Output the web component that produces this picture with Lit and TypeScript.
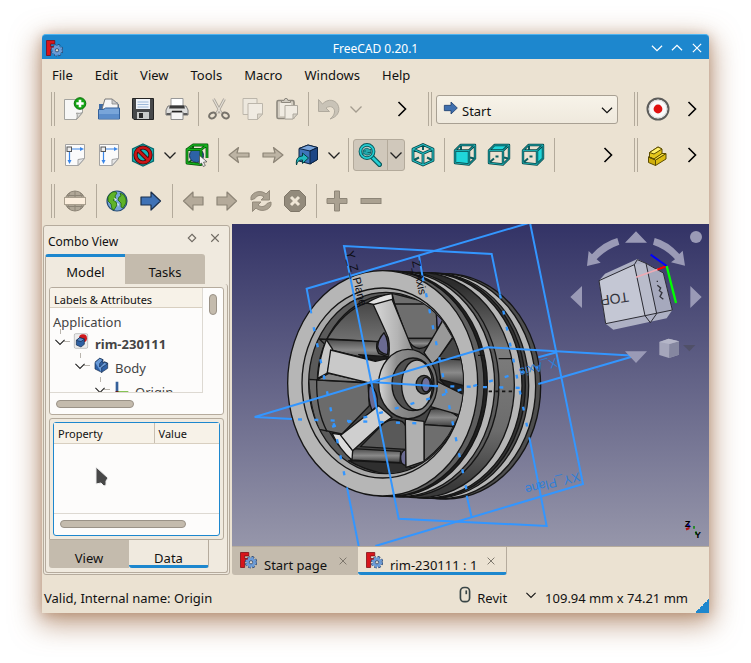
import { LitElement, html, svg, css, nothing } from "lit";
import type { SVGTemplateResult, TemplateResult } from "lit";
import { customElement, property } from "lit/decorators.js";
import { classMap } from "lit/directives/class-map.js";

const logo = svg`
  <path d="M2 2h11v4.500H7.500V10H12v4H7.500v8H2z" fill="#d8161c" stroke="#7c0a10" />
  <circle cx="16" cy="15" r="5.500" fill="none" stroke="#243f68" stroke-width="5.500" stroke-dasharray="2.700 1.620" />
  <circle cx="16" cy="15" r="4.200" fill="none" stroke="#6c9bd6" stroke-width="3.500" />
  <circle cx="16" cy="15" r="5.500" fill="none" stroke="#6c9bd6" stroke-width="3.800" stroke-dasharray="2.300 2.020" />
  <circle cx="16" cy="15" r="2.200" fill="#e4dccf" stroke="#243f68" />`;

const arrowRight = (fill: string, line: string) => svg`
  <path d="M2 8h10V3l9.500 9L12 21v-5H2z" fill=${fill} stroke=${line} stroke-width="1.200" stroke-linejoin="round" />`;
const arrowLeft = (fill: string, line: string) => svg`
  <path d="M22 8H12V3l-9.500 9L12 21v-5h10z" fill=${fill} stroke=${line} stroke-width="1.200" stroke-linejoin="round" />`;

/** A wire cube with one face filled; back edges lie under the filled face. */
const boxFrame = (face: string) => svg`
  <g fill="none" stroke-linejoin="round">
    <path d="M8 3v4M3 19l4-3.500M17 14.500l4 1M8.500 13.500h3" stroke="#0c5f62" stroke-width="2" />
    <path d=${face} fill="#20d6da" />
    <path d="M2 7.500h14v14L2 20zM2 7.500L7.500 2H22l-6 5.500M22 2v13.500l-6 6" stroke="#07484b" stroke-width="2.400" />
    <path d="M2 7.500h14v14L2 20zM2 7.500L7.500 2H22l-6 5.500M22 2v13.500l-6 6" stroke="#1fb4b8" stroke-width=".9" />
  </g>`;

const sketchSheet = svg`
  <path d="M2.500 1.500h19v14l-6 7h-13z" fill="#fbfbfb" stroke="#a3a3a3" />
  <path d="M21.500 15.500l-6.500 1v6z" fill="#e6e6e6" stroke="#a3a3a3" />
  <path d="M9 6h9M6.500 9v9" stroke="#3a86e8" stroke-width="1.200" />
  <path d="M17 4l4 2-4 2zM4.500 17l2 4 2-4z" fill="#3a86e8" />
  <rect x="4" y="4" width="4.500" height="4.500" fill="#eee" stroke="#555" />`;

const icons: Record<string, SVGTemplateResult> = {
  logo,
  new: svg`
    <path d="M1.500 2.500h18v13l-6 7h-12z" fill="#f7f7f6" stroke="#a3a39f" />
    <path d="M19.500 15.500c-2 1-4 1-6 .5 1 2 1 4 0 6.500z" fill="#dcdcda" stroke="#9a9a96" />
    <circle cx="17" cy="6.500" r="5.800" fill="#12a512" stroke="#087008" />
    <path d="M17 2.800v7.400M13.300 6.500h7.400" stroke="#fff" stroke-width="2.600" />`,
  open: svg`
    <path d="M2 7h5l1-2h12l2 3v6H2z" fill="#3e6ba5" />
    <path d="M5 12l3-10h7l6 5v6z" fill="#f6f6f6" stroke="#777" />
    <path d="M15 2l0 5h6z" fill="#ccc" stroke="#888" stroke-width=".8" />
    <path d="M1.500 12.500l5 0 2-1.500h14v11h-21z" fill="#79a5d9" stroke="#34619b" />
    <path d="M2 17h20v4.500H2z" fill="#5c8dca" />`,
  save: svg`
    <path d="M1.500 1.500h21v21H3l-1.500-1.500z" fill="#46484a" stroke="#242424" />
    <rect x="5" y="2" width="14" height="10" fill="#f1f5fa" />
    <path d="M6.500 5h11M6.500 7.500h11M6.500 10h11" stroke="#9db8d8" />
    <rect x="6" y="15" width="12" height="7" fill="#c9cbca" />
    <rect x="8" y="16" width="4" height="5" fill="#2b2b2b" />`,
  print: svg`
    <path d="M6 10V1.500h12V10" fill="#fff" stroke="#999" />
    <path d="M3 9h18l2 4v5H1v-5z" fill="#dededd" stroke="#777" />
    <path d="M5 8.500h14l1 3H4z" fill="#3a3a3a" />
    <path d="M1.500 16h21v2h-21z" fill="#5a5a5a" />
    <path d="M6 15h12v7.500H6z" fill="#f4f4f4" stroke="#8a8a8a" />
    <path d="M7 14.500h10" stroke="#222" stroke-width="1.500" />`,
  cut: svg`
    <path d="M6.500 2l7.500 14M17.500 2L10 16" stroke="#a9a399" stroke-width="2.800" />
    <path d="M6.500 2l7.500 14M17.500 2L10 16" stroke="#e4dfd6" stroke-width="1.200" />
    <g fill="none" stroke="#77736b" stroke-width="2"><ellipse cx="5.500" cy="18.500" rx="3.600" ry="2.700" transform="rotate(-30 5.500 18.500)" /><ellipse cx="18.500" cy="18.500" rx="3.600" ry="2.700" transform="rotate(30 18.500 18.500)" /></g>`,
  copy: svg`
    <path d="M2 1.500h14v16H2z" fill="#ede8de" stroke="#bcb6ab" />
    <path d="M7 6.500h14.500V17l-5 5.500H7z" fill="#f0ebe2" stroke="#bcb6ab" />
    <path d="M21.500 17h-5v5.500z" fill="#dcd6cb" stroke="#bcb6ab" />`,
  paste: svg`
    <rect x="2" y="3.500" width="17" height="18" rx="1.500" fill="#d4cec2" stroke="#8e897f" stroke-width="1.600" />
    <path d="M5 6h11v13H5z" fill="#f0ebe2" />
    <path d="M6.500 5.500v-2H9l1-2h2l1 2h2.500v2z" fill="#d0cbc1" stroke="#8e897f" />
    <path d="M10 8.500h12.500V17L18 22h-8z" fill="#f0ebe2" stroke="#aea99f" />
    <path d="M22.500 17H18v5z" fill="#d9d3c8" stroke="#aea99f" />`,
  undo: svg`
    <path d="M1.500 2.500v12h11L9 11c4-3 9-1 8.500 4-.2 3-2 5-4.500 7 7-2 10-7 8.500-12.500C19.500 2.500 11 1 5.500 7z" fill="#c9c3b7" stroke="#b0aa9e" />`,
  start: arrowRight("#3f6fae", "#1c3c6b"),
  record: svg`
    <circle cx="12" cy="12" r="10.500" fill="#fafafa" stroke="#5d5d5b" stroke-width="2" />
    <circle cx="12" cy="12" r="8.800" fill="none" stroke="#dcdcdc" />
    <circle cx="12" cy="12" r="4.400" fill="#e01010" />`,
  sheet: sketchSheet,
  drawstyle: svg`
    <path d="M12 1l10.500 5v12L12 23 1.500 18V6z" fill="#16b3b8" stroke="#07696d" stroke-width="1.200" />
    <circle cx="12" cy="12" r="7.500" fill="none" stroke="#3f0708" stroke-width="4.200" />
    <path d="M7 7l10 10" stroke="#3f0708" stroke-width="4.200" />
    <circle cx="12" cy="12" r="7.500" fill="none" stroke="#cb1517" stroke-width="2.600" />
    <path d="M6.800 6.800l10.400 10.400" stroke="#cb1517" stroke-width="2.600" />`,
  boxsel: svg`
    <path d="M8 3v4M3 20l4-3" stroke="#0a6a10" stroke-width="2" />
    <circle cx="11.500" cy="12.500" r="7" fill="#2d62a6" stroke="#163358" />
    <g fill="none" stroke-linejoin="round">
      <path d="M2 6.500h14v15L2 20zM2 6.500L8 2h14l-6 4.500M22 2v13" stroke="#064e09" stroke-width="2.800" />
      <path d="M2 6.500h14v15L2 20zM2 6.500L8 2h14l-6 4.500M22 2v13" stroke="#14b31c" stroke-width="1.300" />
    </g>
    <path d="M14.500 12.500v9l2-1.500 1.800 3.500 2-1-1.800-3.300 3.500-.4z" fill="#f2f2f2" stroke="#444" stroke-width=".7" />`,
  back: svg`<path d="M22 10H10l1.500-5.500L2 12l9.500 7.500L10 14h12z" fill="#bdb4a4" stroke="#8d8577" stroke-width="1.200" stroke-linejoin="round" />`,
  forward: svg`<path d="M2 10h12l-1.500-5.500L22 12l-9.500 7.500L14 14H2z" fill="#bdb4a4" stroke="#8d8577" stroke-width="1.200" stroke-linejoin="round" />`,
  link: svg`
    <path d="M4 5.500L13 2l9.500 2.500v12L15 21 4 18z" fill="#3f74ba" stroke="#0d2340" />
    <path d="M4 5.500L13 2l9.500 2.500L15 8z" fill="#78a3da" stroke="#0d2340" />
    <path d="M15 8v13l7.500-4.500v-12z" fill="#1d4685" stroke="#0d2340" />
    <path d="M1.500 22c-1-6 2-9 6-9v-3l6 5-6 5.500v-3.500c-3 0-5 1-6 5z" fill="#22b9be" stroke="#053f42" />`,
  zoom: svg`
    <path d="M13.500 13.500l8 8" stroke="#07585b" stroke-width="5" stroke-linecap="round" />
    <path d="M13.500 13.500l8 8" stroke="#24cdd2" stroke-width="2.600" stroke-linecap="round" />
    <circle cx="9" cy="8.500" r="6.600" fill="#b5ccc8" stroke="#07585b" stroke-width="3.600" />
    <circle cx="9" cy="8.500" r="6.600" fill="none" stroke="#24cdd2" stroke-width="1.800" />
    <path d="M5 8c1-3 5-3.500 7-1l1-1v3.500H9.500M13 9.500c-1 3-5 3.500-7 1l-1 1V8h3" fill="#24a9ad" stroke="#07585b" stroke-width=".8" />`,
  iso: svg`
    <g fill="none" stroke-linejoin="round">
      <path d="M12 2v5M3 17l5-2.500M16 14.500l5 2.500" stroke="#0c5f62" stroke-width="2" />
      <path d="M12 1.500l10 4.500v11.500L12 22 2 17.500V6zM2 6l10 4.500L22 6M12 10.500V22" stroke="#07484b" stroke-width="2.800" />
      <path d="M12 1.500l10 4.500v11.500L12 22 2 17.500V6zM2 6l10 4.500L22 6M12 10.500V22" stroke="#25c0c4" stroke-width="1.200" />
    </g>`,
  front: boxFrame("M2 7.500h14v14L2 20z"),
  top: boxFrame("M2 7.500L7.500 2H22l-6 5.500z"),
  right: boxFrame("M16 7.500L22 2v13.500l-6 6z"),
  part: svg`
    <g stroke="#5d4d00" stroke-width="1" stroke-linejoin="round">
      <path d="M3.500 9.500L12 4l4 2v5l-8 5-4.500-2z" fill="#e3c61c" />
      <path d="M3.500 9.500L12 4l4 2-8 5z" fill="#fff06a" />
      <path d="M2.500 14l7 3v5.500l-7-3z" fill="#cfae0c" />
      <path d="M9.500 17L20 10.500V16L9.500 22.500z" fill="#dcbc12" />
      <path d="M2.500 14l5.500 2 8-5.500 4 0-10.500 6.500z" fill="#ffe83e" />
    </g>`,
  url: svg`
    <circle cx="12" cy="12" r="10" fill="#b0a797" stroke="#8d8577" />
    <path d="M4 6.500h16M4 17.500h16M12 2v20M7 3.500c-3 5-3 12 0 17M17 3.500c3 5 3 12 0 17" fill="none" stroke="#8d8577" />
    <rect x="1.500" y="8.500" width="21" height="7" fill="#fbeedd" stroke="#a99f8e" />`,
  globe: svg`
    <circle cx="12" cy="12" r="10" fill="#76a4d8" stroke="#244b78" stroke-width="1.200" />
    <path d="M5 5c3-3 6-2.500 7-1l-2 3 1 3-3 1 3 2 1 3-3 5-2-1-1-5-3-3 0-4zM15 4l4 2 2 4 0 4-3 5-2-1 0-4-3-3 1-3 2-1z" fill="#5fb32a" stroke="#22630b" stroke-width=".8" />
    <path d="M9 9l3 1-2 2zM12 14l2 1-1 3z" fill="#dcebfa" />`,
  go: arrowRight("#3f72b6", "#1a2f4c"),
  prev: arrowLeft("#b4aa9a", "#8d8577"),
  next: arrowRight("#b4aa9a", "#8d8577"),
  reload: svg`
    <path d="M2 11V8c2-6 11-7 15-3l3.500-3.500V11H12l3-3C12 5.500 8 6 6 9.500z" fill="#aaa191" stroke="#938a7b" />
    <path d="M22 13v3c-2 6-11 7-15 3l-3.500 3.500V13H12l-3 3c3 2.500 7 2 9-1.500z" fill="#aaa191" stroke="#938a7b" />`,
  stop: svg`
    <path d="M7.500 1.500h9l6 6v9l-6 6h-9l-6-6v-9z" fill="#938b7c" stroke="#7e7668" />
    <path d="M8 8l8 8M16 8l-8 8" stroke="#efe6d6" stroke-width="3" />`,
  plus: svg`<path d="M9.500 2h5v7.500H22v5h-7.500V22h-5v-7.500H2v-5h7.500z" fill="#aaa191" stroke="#8d8577" />`,
  minus: svg`<rect x="2" y="9.500" width="20" height="5" fill="#aaa191" stroke="#8d8577" />`,
  down: svg`<path d="M6.500 9.500l5.500 5.500 5.500-5.500" fill="none" stroke="currentColor" stroke-width="1.300" />`,
  up: svg`<path d="M6.500 14.500L12 9l5.500 5.500" fill="none" stroke="currentColor" stroke-width="1.300" />`,
  more: svg`<path d="M8.500 5l7 7-7 7" fill="none" stroke="#000" stroke-width="1.600" />`,
  close: svg`<path d="M7.500 7.500l9 9M16.500 7.500l-9 9" fill="none" stroke="currentColor" stroke-width="1.300" />`,
  float: svg`<path d="M12 7.500l4.500 4.500-4.500 4.500L7.500 12z" fill="none" stroke="currentColor" stroke-width="1.300" />`,
  doc: svg`
    <rect x="2" y="1" width="20" height="22" rx="2" fill="#ececec" stroke="#aaa" />
    <circle cx="15" cy="8" r="6" fill="#cf171b" />
    <path d="M5 11l5-4 7 2v8l-5 4-7-3z" fill="#2f60a2" stroke="#12294a" />
    <path d="M5 11l5-4 7 2-5 4z" fill="#5b8dcd" stroke="#12294a" />`,
  body: svg`
    <path d="M3 8l7-6 5 2v5l2-2 5 2v8l-9 6-10-5z" fill="#2f62a8" stroke="#12294a" />
    <path d="M3 8l7-6 5 2-5 6v5l7-7 5 2-9 6v8" fill="#6a9bd8" stroke="#12294a" />`,
  origin: svg`
    <path d="M6 1v17" stroke="#35609a" stroke-width="4" />
    <path d="M6 18h17" stroke="#5cb01c" stroke-width="5" />
    <circle cx="6" cy="18" r="3" fill="#701010" />`,
  mouse: svg`<rect x="6.500" y="3" width="11" height="17" rx="4.500" fill="none" stroke="#394546" stroke-width="2" /><path d="M13.500 6.500v4.500" stroke="#394546" stroke-width="2" />`,
};

@customElement("app-icon")
export class AppIcon extends LitElement {
  @property() name = "";
  static styles = css`
    :host { display: inline-flex; width: 24px; height: 24px; flex: none; }
    svg { width: 100%; height: 100%; display: block; }
  `;
  render() {
    return html`<svg viewBox="0 0 24 24" aria-hidden="true">${icons[this.name] ?? nothing}</svg>`;
  }
}

/** Outer flange ring, positioned by its rightmost point along the wheel axis. */
const ring = (right: number, fill: string) => {
  const shift = ((right - 737) * 9) / 189;
  return svg`<ellipse cx=${right - 285} cy=${478 + shift} rx="285" ry="338" fill=${fill} />`;
};

@customElement("model-view")
export class ModelView extends LitElement {
  static styles = css`
    :host { display: block; overflow: hidden; contain: size; background: linear-gradient(#333366, #9696aa); }
    svg { display: block; width: 100%; height: 100%; }
    .edge { stroke: #151515; stroke-width: 4; stroke-linejoin: round; }
    .plane { fill: none; stroke: #3396ff; stroke-width: 6; }
    .hidden { fill: none; stroke: #3396ff; stroke-width: 7; stroke-dasharray: 12 37; }
    .label { font-family: "Liberation Sans", Arial, sans-serif; font-size: 38px; fill: #2f7fd8; }
    .axis { font-family: "Liberation Sans", Arial, sans-serif; font-size: 34px; fill: #0c0c12; }
    .face { font-family: "Liberation Sans", Arial, sans-serif; font-size: 42px; fill: #33333b; }
    .tri { font-family: "Liberation Sans", Arial, sans-serif; font-weight: bold; font-size: 28px; fill: #000; }
  `;

  private wheel() {
    return svg`
      <g class="edge">
        ${ring(926, "#4e4e4e")}
        ${ring(911, "#b6b6b6")}
        ${ring(890, "#4e4e4e")}
        ${ring(880, "#333")}
        ${ring(870, "#b6b6b6")}
        ${ring(847, "url(#barrel)")}
        ${ring(801, "#5a5a5a")}
        ${ring(788, "#b6b6b6")}
        ${ring(766, "#202020")}
        ${ring(756, "#5e5e5e")}
        <path d="M800 404H838M738 394H756" fill="none" />
        <ellipse cx="452" cy="478" rx="285" ry="338" fill="#b6b6b6" />
        <ellipse cx="452" cy="477" rx="242" ry="285" fill="#a9a9a9" />
        <ellipse cx="462" cy="477" rx="232" ry="272" fill="#5a5a5a" />
      </g>
      <g clip-path="url(#opening)">
        <ellipse cx="478" cy="477" rx="222" ry="265" fill="#464646" class="edge" />
        <g class="edge">
          <path d="M285 345Q335 260 400 238L440 238 470 335 436 353z" fill="url(#panel)" />
          <path d="M262 345L436 353Q430 370 440 388L466 398 440 412 296 378z" fill="url(#lug)" />
          <path d="M380 392L466 398 460 412 430 412z" fill="#1f1f1f" />
          <path d="M456 326Q472 350 467 392 440 388 437 368 438 345 456 326z" fill="#6a6a92" />
          <path d="M480 208L612 242 616 325 600 343H526L488 240z" fill="#6e6e6e" />
          <path d="M486 240H598" fill="none" />
          <path d="M526 343H600Q592 372 562 374 540 372 526 343z" fill="url(#lug)" />
          <path d="M613 268Q630 285 632 290L616 318z" fill="#6a6a92" />
          <path d="M230 466L408 477 412 545 330 630 262 616Q235 560 230 466z" fill="#6b6b6b" />
          <path d="M254 466Q252 560 285 622" fill="none" />
          <path d="M254 468L290 448 408 475z" fill="#858585" />
          <path d="M412 482Q440 500 436 545L420 560Q405 520 412 482z" fill="#6a6a92" />
          <path d="M385 668L455 598Q480 580 510 592 524 602 522 620V676z" fill="#595959" />
          <path d="M362 674L506 682 504 716 356 708z" fill="url(#lug)" />
          <path d="M350 710L520 718 560 750 470 752Q400 740 350 710z" fill="#2f2f2f" />
          <path d="M522 676Q504 682 506 705 508 724 522 724z" fill="#6a6a92" />
          <path d="M618 404L662 342Q690 372 695 410z" fill="#484848" />
          <path d="M618 404L698 408V488L626 470z" fill="url(#lug)" />
          <path d="M624 466L698 486V515L640 485z" fill="#202020" />
          <path d="M576 602L596 556Q640 545 680 580L664 608z" fill="url(#lug)" />
          <path d="M576 602L664 608Q640 660 576 712z" fill="#6e6e6e" />
        </g>
        <g class="edge">
          <path d="M404 237Q440 215 480 209L483 230 428 242z" fill="#e2e2e2" />
          <path d="M424 242L480 226 545 385 470 402Q476 350 464 330z" fill="url(#spoke)" />
          <path d="M283 347L302 376 286 447 257 463Q262 400 283 347z" fill="#c8c8c8" />
          <path d="M296 378L430 412 466 404 440 470 408 476 286 446z" fill="#c9c9c9" />
          <path d="M300 628L326 632 362 680 360 708Q325 680 300 628z" fill="#dcdcdc" />
          <path d="M326 634L440 545 480 580 450 600 362 680z" fill="#cfcfcf" />
          <path d="M576 386L632 290 662 340 618 404 600 420z" fill="#999" />
          <path d="M610 470L695 512 690 575 596 548z" fill="#868686" />
          <path d="M520 585L576 592V712L522 730z" fill="#b0b0b0" />
        </g>
      </g>
      <g class="edge">
        <ellipse cx="528" cy="480" rx="88" ry="104" fill="url(#hub)" />
        <ellipse cx="543" cy="481" rx="63" ry="79" fill="#505050" />
        <ellipse cx="555" cy="483" rx="46" ry="75" fill="#b6b6b6" />
        <ellipse cx="576" cy="482" rx="24" ry="28" fill="#484848" />
        <ellipse cx="582" cy="482" rx="13" ry="22" fill="#70709a" />
      </g>`;
  }

  private planes() {
    return svg`
      <g class="plane">
        <path d="M804 212L779 90 336 66 500 884 944 906 892 640" />
        <path d="M238 268L224 194 894-4 1053 780 430 966" />
        <path d="M345 790L380 966" />
        <path d="M180 585L68 579 766 370 1210 395 919 480" />
        <path d="M415 474L606 486M561 95L572 160M704 815L719 880M919 400L974 385" />
      </g>
      <g class="hidden">
        <path d="M245 310L345 790M804 212L892 640M572 160L704 800M198 586L560 598" />
        <path d="M300 608L919 430M606 486L885 492" />
      </g>
      <path d="M770 502H850" stroke="#151515" stroke-width="5" stroke-dasharray="10 10" />
      <text class="axis" transform="translate(342 84) rotate(76)">Y_Z_Plane</text>
      <text class="axis" transform="translate(540 112) rotate(78)">Z_Axis</text>
      <text class="label" transform="translate(972 402) rotate(164)">X_Axis</text>
      <text class="label" transform="translate(1040 745) rotate(166)">XY_Plane</text>`;
  }

  private cube() {
    return svg`
      <g transform="translate(954 0)">
        <g fill="#9a9ab6">
          <path d="M258 22l33 34h-66zM258 417l33-35h-66zM61 219l35-33v66zM455 219l-34-33v66z" />
          <circle cx="438" cy="39" r="18" />
          <path d="M202 42l6 20q-40 14-68 44l12 10-41 10 5-45 10 10q34-38 76-49zM314 42l-5 20q40 14 66 44l-12 9 42 10-7-45-10 10q-34-38-74-48z" />
        </g>
        <path d="M147 170L165 149 262 105 288 118 340 147 367 258 350 283 190 317 167 299z" fill="#aeb1c4" />
        <path d="M147 170L253 122 285 275 167 299z" fill="#c4c7d4" />
        <path d="M253 122L288 118 320 269 285 275z" fill="#b9bccb" />
        <path d="M288 118L340 147 367 258 320 269z" fill="#a6a9bd" />
        <path d="M147 170L253 122 285 275 167 299zM288 118L340 147 367 258 285 275M288 118L320 269 301 296 285 275M253 122L262 107 288 118" fill="none" stroke="#2b2b33" stroke-width="3" />
        <text class="face" transform="translate(234 204) rotate(172)">TOP</text>
        <path d="M322 170v4M322 184l10 8-4 8 8 6-6 12 10 8" fill="none" stroke="#33333b" stroke-width="4" />
        <path d="M258 160L325 136" stroke="#eeaab4" stroke-width="5" />
        <path d="M322 137L350 126" stroke="#f00" stroke-width="6" />
        <path d="M350 126L302 92" stroke="#00f" stroke-width="6" />
        <path d="M350 126L378 237" stroke="#0f0" stroke-width="7" />
        <path d="M328 354l28-10 31 8v40l-30 10-29-9z" fill="#a5a6bb" />
        <path d="M358 360l29-8v40l-30 10z" fill="#8587a0" />
        <path d="M328 354l28-10 31 8-29 8z" fill="#b5b6c8" />
        <path d="M399 363h37l-18 19z" fill="#505068" />
      </g>
      <path d="M1366 900l8 10" stroke="#2020b0" stroke-width="7" />
      <path d="M1372 912l-10 4" stroke="#b01515" stroke-width="7" />
      <path d="M1386 906v8M1392 922v10" stroke="#128812" stroke-width="5" />
      <text class="tri" x="1358" y="910">Z</text>
      <text class="tri" x="1388" y="942">Y</text>`;
  }

  render() {
    return html`
      <svg viewBox="0 0 1431 966" preserveAspectRatio="xMidYMid slice" role="img" aria-label="3D view of the rim model">
        <defs>
          <linearGradient id="barrel" x1="0" y1="0" x2="0" y2="1"><stop offset="0.05" stop-color="#2c2c2c" /><stop offset="0.35" stop-color="#7c7c7c" /><stop offset="0.7" stop-color="#6c6c6c" /><stop offset="0.95" stop-color="#3a3a3a" /></linearGradient>
          <linearGradient id="lug" x1="0" y1="0" x2="0" y2="1"><stop offset="0" stop-color="#4a4a4a" /><stop offset="0.5" stop-color="#8a8a8a" /><stop offset="1" stop-color="#3c3c3c" /></linearGradient>
          <linearGradient id="panel" x1="0" y1="0" x2="0" y2="1"><stop offset="0" stop-color="#484848" /><stop offset="1" stop-color="#727272" /></linearGradient>
          <linearGradient id="spoke" x1="0" y1="0" x2="1" y2="0"><stop offset="0" stop-color="#d8d8d8" /><stop offset="0.6" stop-color="#b4b4b4" /><stop offset="1" stop-color="#8a8a8a" /></linearGradient>
          <linearGradient id="hub" x1="0" y1="0" x2="1" y2="0"><stop offset="0" stop-color="#d8d8d8" /><stop offset="0.3" stop-color="#8e8e8e" /><stop offset="1" stop-color="#6a6a6a" /></linearGradient>
          <clipPath id="opening"><ellipse cx="462" cy="477" rx="231" ry="271" /></clipPath>
        </defs>
        ${this.wheel()} ${this.planes()} ${this.cube()}
      </svg>`;
  }
}

@customElement("app-root")
export class AppRoot extends LitElement {
  static styles = css`
    :host {
      display: flex; box-sizing: border-box; min-height: 100vh; padding: 34px 42px 50px;
      background: #fff; color: #111; font: 13px/18px "Noto Sans", "Open Sans", sans-serif; overflow: hidden;
    }
    * { box-sizing: border-box; }
    button, select { font: inherit; color: inherit; border: 0; background: none; padding: 0; margin: 0; }
    .window {
      flex: 1; min-width: 0; display: flex; flex-direction: column; background: #ebe2d2; border-radius: 4px 4px 0 0;
      box-shadow: 0 2px 12px rgba(150, 95, 55, 0.35), 0 8px 28px 3px rgba(150, 95, 55, 0.6);
    }
    .title {
      height: 25px; display: grid; grid-template-columns: 1fr auto 1fr; align-items: center; background: #1d87ce;
      color: #fff; border-top: 1px solid #4fb4f0; border-radius: 4px 4px 0 0; padding: 0 2px;
    }
    .title h1 { margin: 0; font-size: 12px; font-weight: 400; line-height: 24px; padding-top: 2px; }
    .small { width: 20px; height: 20px; display: inline-flex; align-items: center; justify-content: center; }
    .small app-icon { width: 20px; height: 20px; }
    .title .small app-icon { width: 22px; height: 22px; }
    .title .logo { width: 18px; height: 18px; margin-left: 1px; }
    .controls { display: flex; justify-content: flex-end; }
    .menu { height: 27px; display: flex; gap: 2px; padding-top: 6px; }
    .menu button { padding: 0 10px; height: 20px; }
    .row { height: 46px; display: flex; align-items: center; }
    .bar { display: flex; align-items: center; }
    .grow { flex: 1; min-width: 0; }
    .grip { width: 4px; height: 34px; margin: 0 3px 0 9px; border: solid #b3aa9b; border-width: 0 1px; }
    .sep { width: 1px; height: 34px; margin: 0 3px 0 4px; background: #b3aa9b; }
    .tool { width: 34px; height: 32px; display: inline-flex; align-items: center; justify-content: center; flex: none; }
    .tool.arrow { width: 20px; color: #222; }
    .tool.dim { color: #a49c8f; }
    .end { margin-left: auto; }
    .split { display: flex; margin: 0 1px; border: 1px solid #b3aa9b; border-radius: 3px; background: #d0c8bb; height: 32px; width: 52px; }
    .split .tool { height: 30px; width: 33px; padding-right: 2px; }
    .split .tool.arrow { width: 17px; border-left: 1px solid #b3aa9b; padding: 0; }
    .combo { position: relative; width: 182px; height: 29px; margin: 0 7px 0 1px; }
    .combo select {
      appearance: none; width: 100%; height: 100%; padding: 4px 24px 0 25px; border: 1px solid #a8a093;
      border-radius: 3px; background: linear-gradient(#f7f3e9, #efe9dd);
    }
    .combo app-icon { position: absolute; pointer-events: none; top: 5px; }
    .combo .lead { left: 7px; width: 16px; height: 16px; }
    .combo .drop { right: 0; width: 22px; height: 22px; top: 4px; }
    .main { flex: 1; min-height: 320px; display: flex; }
    .dock {
      width: 187px; margin: 1px 2px 0 1px; flex: none; display: flex; flex-direction: column; background: #f0eadf;
      border: 1px solid #b5ab9d; border-radius: 3px; padding: 0 1px 1px;
    }
    .dock header { height: 28px; display: flex; align-items: flex-start; padding: 2px 3px 0; color: #6f6a62; }
    .dock h2 { flex: 1; margin: 5px 0 0; font-size: 12px; font-weight: 400; color: #111; }
    .dock header .small { margin-left: 3px; }
    .tabs { display: flex; height: 30px; }
    .tabs button { width: 80px; background: #c4bbad; padding-top: 6px; border-radius: 0 3px 0 0; }
    .tabs .on { background: #f0eadf; border-top: 3px solid #1d87ce; padding-top: 3px; border-left: 1px solid #b5ab9d; border-radius: 3px 0 0 0; }
    .pane { flex: 1; min-height: 0; display: flex; flex-direction: column; padding: 3px 3px 4px; border: solid #b5ab9d; border-width: 0 1px 1px; border-radius: 0 3px 3px 3px; }
    .tree {
      flex: 1; min-height: 0; display: grid; grid-template: minmax(0, 1fr) 21px / minmax(0, 1fr) 20px; border: 1px solid #b5ab9d;
      border-radius: 3px; background: #fdfcfb; margin-bottom: 3px; overflow: hidden;
    }
    .content { overflow: hidden; contain: size; border: solid #ddd9d2; border-width: 0 1px 1px 0; }
    .head { height: 20px; background: #f7f2e8; border-bottom: 1px solid #d8cfc0; padding: 3px 4px 0; font-size: 11px; }
    .tree ul { margin: 0; padding: 0; list-style: none; color: #444; }
    .tree .root { padding: 3px 0 0; }
    .root > li > span { padding-left: 3px; }
    .tree ul ul ul { padding-left: 20px; }
    .tree li { line-height: 22px; }
    .node { position: relative; display: flex; align-items: flex-start; height: 24px; color: #222; white-space: nowrap; }
    .node::before { content: ""; position: absolute; left: 10px; top: -4px; width: 1px; height: 5px; background: #b9b5ae; }
    .node::after { content: ""; position: absolute; left: 14px; top: 8px; width: 6px; height: 1px; background: #b9b5ae; }
    .node .twig { width: 20px; height: 20px; margin-top: -1px; }
    .node .kind { width: 16px; height: 16px; margin: 0 6px 0 3px; }
    .node span { color: #444; padding-top: 1px; line-height: 20px; }
    .node b { font-weight: 700; }
    .track { display: flex; padding: 7px 6px; }
    .track.v { padding: 6px; }
    .thumb { background: #c4bbad; border: 1px solid #9a9287; border-radius: 5px; height: 8px; width: 78px; }
    .v .thumb { width: 8px; height: 21px; }
    .wide .thumb { width: 126px; }
    .frame { border: 1px solid #b5ab9d; border-radius: 3px 3px 3px 0; padding: 3px; height: 122px; flex: none; }
    .props { height: 114px; border: 1px solid #1d87ce; border-radius: 3px; background: #fdfcfb; display: flex; flex-direction: column; }
    .grid { flex: 1; border-bottom: 1px solid #ddd9d2; position: relative; }
    .pointer { position: absolute; left: 40px; top: 42px; width: 17px; height: 24px; }
    table { border-collapse: collapse; width: 100%; table-layout: fixed; }
    th { font-size: 11px; font-weight: 400; text-align: left; height: 20px; line-height: 16px; padding: 3px 4px 0; background: #f7f2e8; border-bottom: 1px solid #d8cfc0; }
    th:first-child { width: 100px; border-right: 1px solid #c8bfb1; }
    .wide { height: 21px; padding: 6px; }
    .bottom { height: 28px; }
    .bottom button { border-radius: 0 0 0 3px; padding-top: 7px; }
    .bottom .on { border: solid #b5ab9d; border-width: 0 1px 0 0; border-bottom: 3px solid #1d87ce; border-radius: 0 0 3px 3px; padding-top: 9px; }
    .centre { flex: 1; min-width: 0; display: flex; flex-direction: column; }
    model-view { flex: 1; }
    .docs { height: 29px; display: flex; border-top: 1px solid #b5ab9d; flex: none; }
    .doc { display: flex; align-items: flex-start; padding: 4px 5px 0 7px; background: #c4bbad; width: 126px; border-radius: 0 0 0 3px; }
    .doc.on { background: #ebe2d2; width: 149px; border: solid #b5ab9d; border-width: 0 1px 0 0; border-bottom: 3px solid #1d87ce; border-radius: 0 0 3px 3px; }
    .doc app-icon { width: 18px; height: 18px; }
    .doc .name { flex: 1; text-align: left; padding: 5px 0 0 7px; line-height: 18px; white-space: nowrap; }
    .doc .small { color: #7b756b; }
    .status { height: 38px; display: flex; align-items: center; padding: 8px 0 0 2px; position: relative; }
    .status .msg { flex: 1; }
    .status .nav { display: flex; align-items: center; }
    .status .nav app-icon { width: 20px; height: 20px; margin-bottom: 6px; }
    .status .nav span { padding: 0 14px 0 2px; }
    .status .size { padding: 0 21px 0 4px; }
    .status .corner { position: absolute; right: 0; bottom: 0; width: 14px; height: 14px; background: linear-gradient(135deg, transparent 50%, #1d87ce 50%); }
  `;

  private tool(name: string, label: string, extra: Record<string, boolean> = {}): TemplateResult {
    return html`<button class=${classMap({ tool: true, ...extra })} aria-label=${label}><app-icon name=${name}></app-icon></button>`;
  }

  private tools(...list: string[]): TemplateResult[] {
    return list.map((n) => {
      if (n === "|") return html`<span class="sep"></span>`;
      if (n === "down") return this.tool("down", "More choices", { arrow: true });
      return this.tool(n, n);
    });
  }

  private small(name: string, label: string) {
    return html`<button class="small" aria-label=${label}><app-icon name=${name}></app-icon></button>`;
  }

  private get grip() {
    return html`<span class="grip"></span>`;
  }

  private more() {
    return this.tool("more", "Show hidden tools", { end: true });
  }

  private node(icon: string, label: unknown) {
    return html`<div class="node"><app-icon class="twig" name="down"></app-icon><app-icon class="kind" name=${icon}></app-icon><span>${label}</span></div>`;
  }

  render() {
    return html`
      <div class="window">
        <div class="title">
          <app-icon class="logo" name="logo"></app-icon>
          <h1>FreeCAD 0.20.1</h1>
          <div class="controls">${this.small("down", "Minimize")}${this.small("up", "Maximize")}${this.small("close", "Close")}</div>
        </div>
        <nav class="menu">
          ${["File", "Edit", "View", "Tools", "Macro", "Windows", "Help"].map((m) => html`<button>${m}</button>`)}
        </nav>
        <div class="row">
          <div class="bar grow">
            ${this.grip}${this.tools("new", "open", "save", "print", "|", "cut", "copy", "paste", "|", "undo")}
            ${this.tool("down", "Undo history", { arrow: true, dim: true })}${this.more()}
          </div>
          <div class="bar">
            ${this.grip}
            <div class="combo">
              <select aria-label="Workbench"><option>Start</option></select>
              <app-icon class="lead" name="start"></app-icon>
              <app-icon class="drop" name="down"></app-icon>
            </div>
          </div>
          <div class="bar">${this.grip}${this.tools("record")}${this.more()}</div>
        </div>
        <div class="row">
          <div class="bar grow">
            ${this.grip}${this.tools("sheet", "sheet", "drawstyle", "down", "boxsel", "|", "back", "forward", "link", "down", "|")}
            <div class="split">${this.tools("zoom", "down")}</div>
            ${this.tools("iso", "|", "front", "top", "right", "|")}${this.more()}
          </div>
          <div class="bar">${this.grip}${this.tools("part")}${this.more()}</div>
        </div>
        <div class="row">
          <div class="bar">
            ${this.grip}${this.tools("url", "|", "globe", "go", "|", "prev", "next", "reload", "stop", "|", "plus", "minus")}
          </div>
        </div>
        <div class="main">
          <aside class="dock">
            <header><h2>Combo View</h2>${this.small("float", "Float")}${this.small("close", "Close")}</header>
            <div class="tabs"><button class="on">Model</button><button>Tasks</button></div>
            <div class="pane">
              <div class="tree">
                <div class="content">
                  <div class="head">Labels &amp; Attributes</div>
                  <ul class="root">
                    <li>
                      <span>Application</span>
                      <ul>
                        <li>
                          ${this.node("doc", html`<b>rim-230111</b>`)}
                          <ul>
                            <li>${this.node("body", "Body")}<ul><li>${this.node("origin", "Origin")}</li></ul></li>
                          </ul>
                        </li>
                      </ul>
                    </li>
                  </ul>
                </div>
                <div class="track v"><div class="thumb"></div></div>
                <div class="track"><div class="thumb"></div></div>
              </div>
              <div class="frame">
                <div class="props">
                  <div class="grid">
                    <table><thead><tr><th>Property</th><th>Value</th></tr></thead></table>
                    <svg class="pointer" viewBox="0 0 17 24" aria-hidden="true"><path d="M2 2v17l5-1 3 3 2-1v-4l2-3z" fill="#484848" stroke="#eee" stroke-width="1" /></svg>
                  </div>
                  <div class="track wide"><div class="thumb"></div></div>
                </div>
              </div>
              <div class="tabs bottom"><button>View</button><button class="on">Data</button></div>
            </div>
          </aside>
          <section class="centre">
            <model-view></model-view>
            <div class="docs">
              <div class="doc"><app-icon name="logo"></app-icon><button class="name">Start page</button>${this.small("close", "Close Start page")}</div>
              <div class="doc on"><app-icon name="logo"></app-icon><button class="name">rim-230111 : 1</button>${this.small("close", "Close rim-230111")}</div>
            </div>
          </section>
        </div>
        <footer class="status">
          <span class="msg">Valid, Internal name: Origin</span>
          <button class="nav"><app-icon name="mouse"></app-icon><span>Revit</span><app-icon name="down"></app-icon></button>
          <span class="size">109.94 mm x 74.21 mm</span>
          <span class="corner"></span>
        </footer>
      </div>`;
  }
}
